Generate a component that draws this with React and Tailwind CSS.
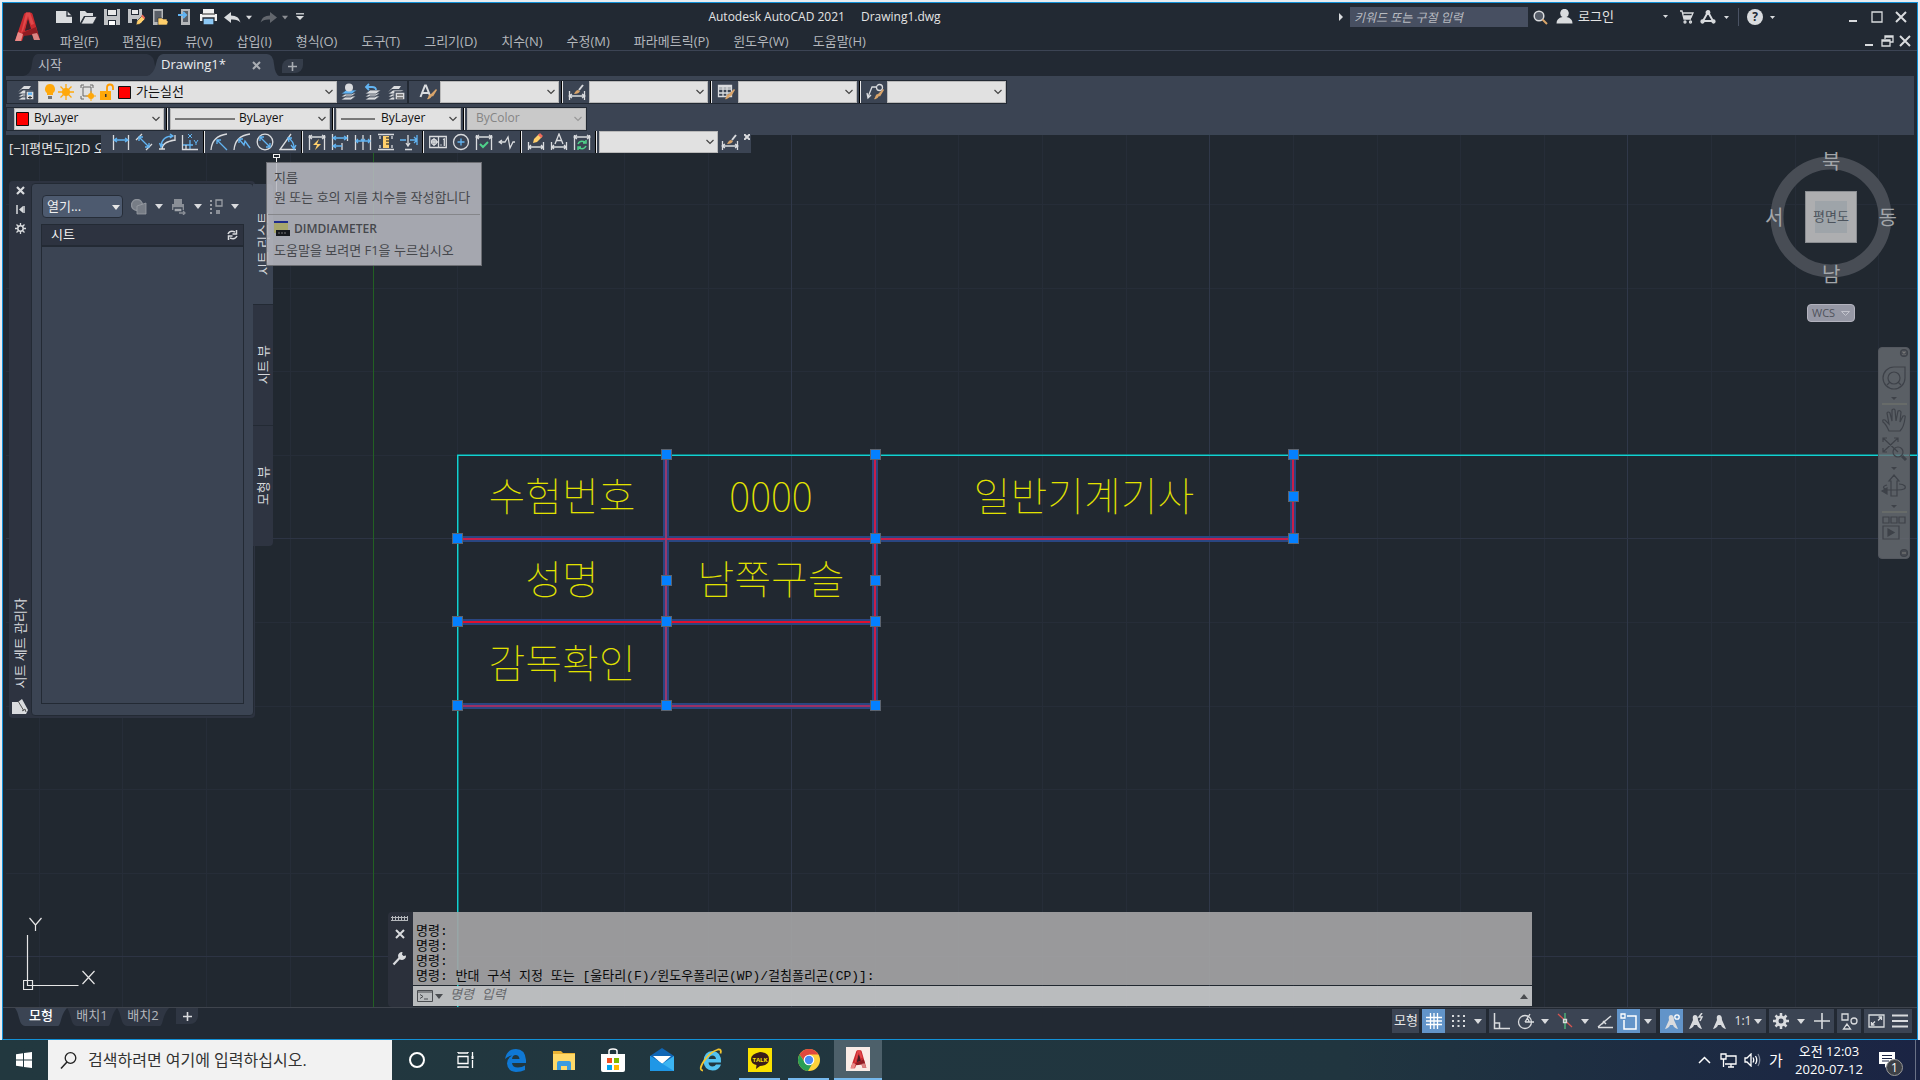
import React from "react";

const FONT = "font-['Open_Sans','Noto_Sans_CJK_KR',sans-serif]";
const W = "#d9dbde";
const B = "#62b4f2";
const Y = "#ffcf6b";

function Svg({ w = 18, h = w, box, children, className = "" }) {
  return (
    <svg width={w} height={h} viewBox={box || `0 0 ${w} ${h}`} fill="none" stroke={W} strokeWidth="1.3" className={"shrink-0 " + className}>
      {children}
    </svg>
  );
}

function Caret({ className = "w-[10px]", color = W, w = 7 }) {
  return (
    <span className={"flex items-center justify-center " + className}>
      <svg width={w} height="5" viewBox="0 0 8 5"><path d="M0 0h8L4 5z" fill={color} /></svg>
    </span>
  );
}

function IconButton({ label, className = "w-6", children }) {
  return (
    <button type="button" aria-label={label} className={"flex shrink-0 items-center justify-center " + className}>
      {children}
    </button>
  );
}

function AcadLogo({ w = 27, h = 30 }) {
  return (
    <svg width={w} height={h} viewBox="0 0 27 30">
      <path d="M1 29 10 2q.6-1.5 2.500-1.500h4q1.500 0 2 1.500L26 28h-6l-2-6-8 1-2 6z" fill="#c92a2f" />
      <path d="M14 7l3 10-6 2z" fill="#232a34" />
      <path d="M12 .5h4L20 12l-3 1-3-9-5 15-2 2z" fill="#e0484a" />
      <path d="M8 21 22 15l2 7-14 2z" fill="#8f1c22" />
      <path d="M1 29l3-9 5 2-2 7z" fill="#e98a88" />
      <path d="M20 28l-2-6 5-1 3 7z" fill="#d98583" />
      <path d="M14 8l2.500 8-5 2z" fill="#4b1c22" />
    </svg>
  );
}

/* ---------- title bar ---------- */

const quickAccess = [
  ["새로 만들기", <Svg key="n" w={16} h={14}><path d="M0 1h11l5 5v7H0z" fill={W} stroke="none" /><path d="M11 0v6h5" stroke="#232a34" /></Svg>],
  ["열기", <Svg key="o" w={17} h={14}><path d="M0 13V1h5l2 2h6v3H4z" fill={W} stroke="none" /><path d="M1 14 5 6.500h12L13 14z" fill={W} stroke="#232a34" strokeWidth=".8" /></Svg>],
  ["저장", <Svg key="s" w={16}><path d="M0 0h16v16H0z" fill="#c0c2c5" stroke="none" /><path d="M3 0h10v7H3zM4 11h8v5H4z" fill="#232a34" stroke="none" /><path d="M4 1h8v5H4z" fill="#e8e8e8" stroke="none" /><path d="M5 12h6v4H5z" fill="#fff" stroke="none" /></Svg>],
  ["다른 이름으로 저장", <Svg key="sa" w={17} h={16}><path d="M0 0h14v14H0z" fill="#c0c2c5" stroke="none" /><path d="M3 0h8v6H3zM4 10h5v4H4z" fill="#232a34" stroke="none" /><path d="M4 1h6v4H4z" fill="#e8e8e8" stroke="none" /><path d="M8 16l1-4 5-5 3 3-5 5z" fill={Y} stroke="#232a34" strokeWidth=".6" /><path d="M13 7l1.500-1.500L17.500 9 16 10z" fill="#ee6a5c" stroke="none" /></Svg>],
  ["웹에서 열기", <Svg key="w" w={16}><path d="M1 0h10v16H1z" fill="#b5b7ba" stroke="none" /><path d="M2.500 2h7v11h-7z" fill="#5a5f67" stroke="none" /><path d="M6 16V9h4l1 1h4v2h1.500L15 16z" fill={Y} stroke="#232a34" strokeWidth=".6" /></Svg>],
  ["모바일로 저장", <Svg key="m" w={14} h={16}><path d="M4 0h9v16H4z" fill="#b5b7ba" stroke="none" /><path d="M6 2h5v11H6z" fill="#5a5f67" stroke="none" /><path d="M1 6h7M6 3l3 3-3 3" stroke={B} strokeWidth="2" /></Svg>],
  ["플롯", <Svg key="p" w={17} h={16}><path d="M3 0h11v5H3zM0 5h17v7H0z" fill="#f0f0f0" stroke="none" /><path d="M3 9h11v7H3z" fill="#8cc8f5" stroke="#232a34" /><path d="M2 5h13" stroke="#555" /></Svg>],
];

function TitleBar() {
  const menus = ["파일(F)", "편집(E)", "뷰(V)", "삽입(I)", "형식(O)", "도구(T)", "그리기(D)", "치수(N)", "수정(M)", "파라메트릭(P)", "윈도우(W)", "도움말(H)"];
  return (
    <header className="flex border-b border-[#3c4454] text-[#e4e4e4]">
      <button type="button" aria-label="응용프로그램 메뉴" className="flex w-[49px] shrink-0 items-center justify-center"><AcadLogo /></button>
      <div className="min-w-0 flex-1">
        <div className="flex h-7 items-center">
          {quickAccess.map(([l, i]) => <IconButton key={l} label={l}>{i}</IconButton>)}
          <IconButton label="명령취소"><Svg w={17} h={11}><path d="M0 5.500 7 0v3.500q8 0 9.500 7-3-3.500-9.500-3V11z" fill={W} stroke="none" /></Svg></IconButton>
          <Caret w={6} />
          <IconButton label="명령복구" className="ml-[2px] w-6"><Svg w={17} h={11}><path d="M17 5.500 10 0v3.500q-8 0-9.500 7 3-3.500 9.500-3V11z" fill="#62666d" stroke="none" /></Svg></IconButton>
          <Caret w={6} color="#8b8e93" />
          <IconButton label="신속 접근 도구막대 사용자화" className="w-5"><Svg w={8} h={8}><path d="M0 .8h8" /><path d="M0 3h8L4 7z" fill={W} stroke="none" /></Svg></IconButton>
          <h1 className="flex-1 text-center text-xs"><span>Autodesk AutoCAD 2021</span><span className="ml-4">Drawing1.dwg</span></h1>
          <div className="flex h-full shrink-0 items-center">
            <Svg w={5} h={8} className="mr-[6px]"><path d="M0 0l4 4-4 4z" fill={W} stroke="none" /></Svg>
            <input aria-label="검색" placeholder="키워드 또는 구절 입력" className="h-5 w-[178px] bg-[#474f61] px-1 text-xs italic placeholder:text-[#b9bcc2]" />
            <IconButton label="찾기" className="w-6"><Svg w={15}><circle cx="6" cy="6" r="4.800" fill="#555c68" strokeWidth="1.500" /><path d="M9.500 9.500l4.500 4.500" stroke="#d9a46a" strokeWidth="2" /></Svg></IconButton>
            <button type="button" className="flex items-center gap-[5px] pl-1 text-xs">
              <Svg w={17} h={15}><path d="M8.500 0a3.800 4.200 0 0 1 2 8q6 1 6 6.500H.500Q.500 9 6.500 8a3.800 4.200 0 0 1 2-8" fill={W} stroke="none" /></Svg>
              <span className="w-[73px] text-left text-[13px]">로그인</span>
              <Caret w={5} className="w-[18px]" />
            </button>
            <IconButton label="앱 스토어" className="w-6"><Svg w={15} h={14}><path d="M1 1h2l2 8h7M4 3h10l-2 4.500H5M5 6h8" /><circle cx="6" cy="12" r="1" /><circle cx="11.500" cy="12" r="1" /></Svg></IconButton>
            <IconButton label="Autodesk" className="w-5"><Svg w={16} h={14}><path d="M8 2 3 11h10z" strokeWidth="2" /><circle cx="8" cy="2.500" r="1.800" fill={W} /><circle cx="2.500" cy="11.500" r="1.500" fill={W} /><circle cx="13.500" cy="11.500" r="1.500" fill={W} /></Svg></IconButton>
            <Caret w={5} className="w-4" />
            <span className="mx-1 h-[18px] w-px bg-[#4a5263]" />
            <IconButton label="도움말" className="w-6"><span className="flex h-4 w-4 items-center justify-center rounded-full bg-[#d9dbde] text-xs font-bold leading-4 text-[#232a34]">?</span></IconButton>
            <Caret w={5} className="w-[10px]" />
            <IconButton label="최소화" className="ml-16 w-6"><Svg w={10} h={10}><path d="M1 9h8" strokeWidth="2" /></Svg></IconButton>
            <IconButton label="최대화" className="w-6"><Svg w={12}><path d="M1 1h10v10H1z" /></Svg></IconButton>
            <IconButton label="닫기" className="mr-1 w-6"><Svg w={12}><path d="M1 1l10 10M11 1 1 11" strokeWidth="2" /></Svg></IconButton>
          </div>
        </div>
        <div className="flex h-[19px] items-center">
          <nav className="flex gap-6 pl-2 text-[13px] leading-[18px] text-[#b4b7bc]">
            {menus.map((m) => <button type="button" key={m} className="whitespace-nowrap">{m}</button>)}
          </nav>
          <div className="ml-auto mr-[3px] flex">
            <IconButton label="도면 최소화" className="w-[18px]"><Svg w={10} h={10}><path d="M1 9h8" strokeWidth="2" /></Svg></IconButton>
            <IconButton label="도면 복원" className="w-[18px]"><Svg w={13} h={12}><path d="M4 4V1h8v6H9M1 5h8v6H1zM4 2h8M1 6h8" /></Svg></IconButton>
            <IconButton label="도면 닫기" className="w-[18px]"><Svg w={12}><path d="M1 1l10 10M11 1 1 11" strokeWidth="2" /></Svg></IconButton>
          </div>
        </div>
      </div>
    </header>
  );
}

function FileTabs() {
  return (
    <div className="flex h-[25px] items-end pl-5 text-[13px]">
      <button type="button" className="relative h-[22px] w-[132px] text-left text-[#b9bcc2]">
        <svg className="absolute inset-0" width="132" height="22"><path d="M0 22Q8 21 9 10T16 0H124q7 1 8 12v10z" fill="#2e3542" /></svg>
        <span className="relative pl-[15px]">시작</span>
      </button>
      <div className="relative -ml-2 flex h-[22px] w-[132px] items-center justify-between pl-[14px] pr-[17px]">
        <svg className="absolute inset-0" width="132" height="22"><path d="M0 22Q7 20 9 10T16 0H120q6 0 7 10t5 12z" fill="#3b4453" /></svg>
        <button type="button" className="relative text-[13px] text-[#eceef0]">Drawing1*</button>
        <IconButton label="탭 닫기" className="relative w-3"><Svg w={9}><path d="M1 1l7 7M8 1 1 8" strokeWidth="2" stroke="#a9adb3" /></Svg></IconButton>
      </div>
      <button type="button" aria-label="새 탭" className="mb-[3px] ml-[3px] flex h-[14px] w-[21px] items-center justify-center rounded-br-lg rounded-tl-lg bg-[#353d4a]">
        <Svg w={9}><path d="M4.500 0v9M0 4.500h9" strokeWidth="1.600" stroke="#a9adb3" /></Svg>
      </button>
    </div>
  );
}

/* ---------- toolbars ---------- */

function Grip() {
  return <span className="my-1 ml-[2px] mr-px w-[4px] shrink-0 bg-[radial-gradient(#8b929d_40%,transparent_45%)] bg-[length:2px_2px]" />;
}

function Sep() {
  return <span className="mx-[2px] w-[2px] shrink-0 border-l border-black bg-[#e8e8e8]" />;
}

function Combo({ label, value = "", width = "w-[119px]", pad = "pl-1", disabled = false, children }) {
  return (
    <span className={"relative flex h-[22px] shrink-0 " + width}>
      <select aria-label={label} disabled={disabled} defaultValue={value}
        className={"block h-[22px] w-full appearance-none border border-[#b9b9b9] pb-[3px] text-[12px] leading-4 disabled:bg-[#c9c9c9] disabled:text-[#858585] bg-[#e1e1e1] text-[#111] " + pad}>
        <option>{value}</option>
      </select>
      <span className="pointer-events-none absolute inset-y-0 left-0 flex items-center">{children}</span>
      <svg className="pointer-events-none absolute right-1 top-2" width="8" height="6"><path d="M.5 1 4 4.500 7.500 1" fill="none" stroke={disabled ? "#999" : "#444"} strokeWidth="1.200" /></svg>
    </span>
  );
}

const Layers = ({ children, top = W }) => (
  <Svg w={18} h={18}>
    <path d="M1 17 6 13h10l-5 4zM1 14l5-4h10l-5 4z" fill={W} stroke="#3b4453" strokeWidth=".8" />
    <path d="M1 11l5-4h11l-5 4z" fill={top} stroke="#3b4453" strokeWidth=".8" />
    {children}
  </Svg>
);

const brush = <path d="M8 16q3 1 5-3l1 .5L18 7l-1-1-5 5q-2 0-2.500 2T8 16z" fill="#d9a46a" stroke="none" />;

const DimStyle = () => <Svg w={18} h={18}><path d="M1.500 8v9M16.500 8v9M1 13h16M4 11l-3 2 3 2M14 11l3 2-3 2" /><path d="M6 11q2-4 4-4l2 1q-1 3-6 3z" fill="#d9a46a" stroke="none" /><path d="M11 7l4-5" strokeWidth="2" /></Svg>;

const bar = "flex h-6 border border-[#222933] bg-[#3b4453]";

function Toolbars() {
  return (
    <div className="mx-[3px] h-[59px] bg-[#3b4453] pt-1">
      <div className="flex">
        <div className={bar}>
          <Grip />
          <IconButton label="도면층 특성" className="w-6"><Layers><path d="M1 9l6-6h7l-2 3H5z" fill={W} stroke="none" /><path d="M9 8h8v9H9z" fill={W} stroke="#3b4453" /><path d="M11 9.500h4v2.500h-4z" fill={B} stroke="none" /><path d="M11 14.500h4M13 13v3" stroke="#333" strokeWidth="1" /></Layers></IconButton>
          <Combo label="도면층" value="가는실선" width="w-[299px]" pad="pl-[97px] text-[13px]">
            <svg width="96" height="18" viewBox="0 0 96 18">
              <path d="M12 1a5 5 0 0 1 3 9v2H9v-2a5 5 0 0 1 3-9z" fill="#ffa80a" /><path d="M10 13h4v3h-4z" fill="#777" />
              <circle cx="28" cy="9" r="4" fill="#ffa80a" /><path d="M28 1v16M20 9h16M22.500 3.500l11 11M33.500 3.500l-11 11" stroke="#ffa80a" strokeWidth="1.300" />
              <path d="M43 5V2h3M52 2h3v3M43 13v3h3M45 4h8v9h-8z" fill="none" stroke="#666" /><circle cx="53" cy="13" r="3" fill="#ffa80a" /><path d="M53 8v10M48 13h10" stroke="#ffa80a" />
              <path d="M62 8h11v9H62z" fill="#ffa80a" /><path d="M69 8V4.500q0-3 3-3t3 3V7" fill="none" stroke="#ff9c00" strokeWidth="1.800" /><path d="M67 11h1.500v3H67z" fill="#333" />
              <path d="M80.500 3.500h12v12h-12z" fill="#f00" stroke="#111" />
            </svg>
          </Combo>
          <IconButton label="객체의 도면층을 현재로" className="w-6"><Layers top="#62b4f2"><circle cx="9" cy="4.500" r="4" fill={W} stroke="none" /></Layers></IconButton>
          <IconButton label="이전 도면층" className="w-6"><Layers><path d="M2 4h6q4 0 4 3M5 1 2 4l3 3" stroke={B} strokeWidth="1.800" /></Layers></IconButton>
          <IconButton label="도면층 상태" className="w-[22px]"><Layers><path d="M1 9l6-6h7l-2 3H5z" fill={W} stroke="none" /><path d="M8 9h10v8H8z" fill={W} stroke="#3b4453" /><path d="M10 12h6M10 15h6" stroke="#666" /></Layers></IconButton>
        </div>
        <div className={bar}>
          <Grip />
          <IconButton label="문자 스타일" className="w-6"><Svg w={18}><path d="M1.500 14 6 2.500h1L11.500 14M3 10h7" strokeWidth="2" />{brush}</Svg></IconButton>
          <Combo label="문자 스타일 목록" />
          <Sep />
          <IconButton label="치수 스타일" className="w-6"><DimStyle /></IconButton>
          <Combo label="치수 스타일 목록" />
          <Sep />
          <IconButton label="테이블 스타일" className="w-6"><Svg w={18}><path d="M1.500 2.500h13v11h-13zM1.500 6h13M1.500 10h13M6 3v11M10 3v11M2 4h12" />{brush}</Svg></IconButton>
          <Combo label="테이블 스타일 목록" />
          <Sep />
          <IconButton label="다중 지시선 스타일" className="w-6"><Svg w={18}><circle cx="13.500" cy="4.500" r="3" /><path d="M10 4H6L2 14M1 10l1 5 3-3" />{brush}</Svg></IconButton>
          <Combo label="다중 지시선 목록" />
        </div>
      </div>
      <div className="mt-[3px] flex">
        <div className={bar}>
          <Grip />
          <Combo label="색상" value="ByLayer" width="w-[150px]" pad="pl-[19px]"><svg width="17" height="18"><path d="M2.500 2.500h12v13h-12z" fill="#f00" stroke="#111" /></svg></Combo>
          <Sep />
          <Combo label="선종류" value="ByLayer" width="w-[160px]" pad="pl-[68px]"><svg width="66" height="2"><path d="M5 1h60" stroke="#111" strokeWidth="1" /></svg></Combo>
          <Sep />
          <Combo label="선가중치" value="ByLayer" width="w-[125px]" pad="pl-[44px]"><svg width="40" height="2"><path d="M5 1h34" stroke="#111" strokeWidth="1" /></svg></Combo>
          <Sep />
          <Combo label="플롯 스타일" value="ByColor" width="w-[119px]" pad="pl-2" disabled />
        </div>
      </div>
    </div>
  );
}

const ends = <path d="M1.500 2v15M16.500 2v15" />;
const dims = [
  ["선형", <>{ends}<path d="M2 7h14M5 5 2 7l3 2M13 5l3 2-3 2" stroke={B} /></>],
  ["정렬", <><path d="M1 7l6-6M11 17l6-6" /><path d="M4 4l10 10M4 8V4h4M10 14h4v-4" stroke={B} /></>],
  ["호 길이", <><path d="M1 16h6M17 2v6M4 16Q4 9 17 7" /><path d="M3 13Q4 3 15 3M1.500 10l1.500 4 2-3M12 1l3 2-3 2" stroke={B} /></>],
  ["세로좌표", <><path d="M9 7v10M1 12h11" stroke={B} /><path d="M7 1l4 4M11 1 7 5M13 7l2 3 2-3M15 10v2" stroke={B} strokeWidth="1" /><path d="M1.500 2v14.500h15.500M5 12v4" /></>],
  null,
  ["반지름", <><path d="M1 17Q2 3 17 1" /><path d="M7 7l10 10M7 11V7h4" stroke={B} /></>],
  ["꺾기", <><path d="M1 17Q2 3 17 1" /><path d="M6 6l5 6 1-4 5 7M6 10V6h4" stroke={B} /></>],
  ["지름", <><circle cx="9" cy="9" r="7.800" /><path d="M4 4l10 10M4 8V4h4M10 14h4v-4" stroke={B} /></>],
  ["각도", <><path d="M12 1 1 16.500h16" /><path d="M9 5q6 3 6 10M12 12l3 4 2-4M13 5H9l1 4" stroke={B} /></>],
  null,
  ["신속", <>{ends}<path d="M1 4h16M4 2 1 4l3 2M14 2l3 2-3 2" /><path d="M11 6 5 12h4l-2 5 6-6H9z" fill={Y} stroke="none" /></>],
  ["기준선", <><path d="M1.500 1v16M16.500 2v6M11 10v7" /><path d="M2 5h14M5 3 2 5l3 2M13 3l3 2-3 2M2 13h9M5 11l-3 2 3 2" stroke={B} /></>],
  ["연속", <>{ends}<path d="M9 2v15" /><path d="M2 8h14M4 6 2 8l2 2M14 6l2 2-2 2M7 6l2 2 2-2" stroke={B} /></>],
  ["치수 간격", <><path d="M1 1.500h16M1 16.500h16M3 3v3M15 3v3M3 12v3M15 12v3" /><path d="M6 3h6v12H6z" fill={Y} stroke="none" /><path d="M9 5h3M9 8h3M9 11h3" stroke="#5c5137" /></>],
  ["치수 끊기", <><path d="M8 2v10M6 10l2 3 2-3M5 16.500h7" /><path d="M0 7h6M10 7h7M14 4l3 3-3 3M17 2v10" stroke={B} /></>],
  null,
  ["공차", <><path d="M.700 3.500h16.600v11H.700zM9.500 4v11" /><circle cx="5" cy="9" r="2.500" /><path d="M5 5v8M2 9h7M11.500 12h1M14 6.500l1.300-.5v7" /></>],
  ["중심 표식", <><circle cx="9" cy="9" r="7.500" /><path d="M9 5.500v7M5.500 9h7" stroke={B} /></>],
  ["검사", <>{ends}<path d="M1 4h16M4 2 1 4l3 2M14 2l3 2-3 2" /><path d="M5 11l3 3 5-5" stroke="#4fd08a" strokeWidth="2" /></>],
  ["꺾어진 선형", <path d="M1 9h6l3-5 2 11 3-6h2M4 7 1 9l3 2" />],
  null,
  ["치수 편집", <><path d="M1.500 9v8M16.500 9v8M2 14h14M4 12l-2 2 2 2M14 12l2 2-2 2" /><path d="M6 10l1-4 5-5 3 3-5 5z" fill={Y} stroke="none" /><path d="M11 2l2-2 3 3-2 2z" fill="#ee6a5c" stroke="none" /></>],
  ["치수 문자 편집", <><path d="M1.500 9v8M16.500 9v8M2 14h14M4 12l-2 2 2 2M14 12l2 2-2 2M5 11l4-10 4 10M6.500 7.500h5" /></>],
  ["치수 업데이트", <>{ends}<path d="M1 4h16M4 2 1 4l3 2M14 2l3 2-3 2" /><path d="M5 11q2-4 7-2M13 7v3h-3M13 13q-2 4-7 2M5 17v-3h3" stroke="#4fd08a" strokeWidth="1.500" /></>],
  null,
];

function DimToolbar() {
  return (
    <div className="absolute -top-1 left-[98px] z-10 flex h-[22px] items-stretch bg-[#3b4453] pl-px">
      <Grip />
      {dims.map((d, i) => d === null ? <Sep key={i} /> : (
        <IconButton key={i} label={d[0]} className="w-[23px]"><Svg w={18}>{d[1]}</Svg></IconButton>
      ))}
      <Combo label="치수 스타일 선택" />
      <IconButton label="치수 스타일 관리" className="w-6"><DimStyle /></IconButton>
      <button type="button" aria-label="도구막대 닫기" className="flex w-[9px] justify-center pt-[3px]"><Svg w={6}><path d="M0 0l6 6M6 0 0 6" strokeWidth="2" /></Svg></button>
    </div>
  );
}

/* ---------- drawing ---------- */

const minorX = [39, 122, 206, 290, 457, 541, 624, 708, 875, 958, 1042, 1126, 1293, 1377, 1460, 1544, 1711, 1795, 1878];
const majorX = [791, 1209, 1627];
const minorY = [204, 288, 371, 455, 622, 706, 789, 873];
const majorY = [538, 956];
const selected = [
  [457, 539, 1293, 539, "#c81e4a"], [457, 622, 875, 622, "#e0102e"], [457, 706, 875, 706, "#9c2f63"],
  [666, 455, 666, 706, "#97396f"], [875, 455, 875, 706, "#c81e4a"], [1293, 455, 1293, 538, "#c81e4a"],
];
const grips = [[666, 454], [875, 454], [1293, 454], [1293, 496], [457, 538], [875, 538], [1293, 538], [666, 580], [875, 580], [457, 621], [666, 621], [875, 621], [457, 705], [666, 705], [875, 705]];
const labels = [[562, 511, "수험번호"], [771, 511, "0000"], [1084, 511, "일반기계기사"], [562, 594, "성명"], [771, 594, "남쪽구슬"], [562, 678, "감독확인"]];

function Drawing() {
  return (
    <svg className="absolute inset-0 h-full w-full" shapeRendering="crispEdges">
      <g transform="translate(-3 -135)">
        {minorX.map((x) => <path key={x} d={`M${x + 0.5} 135V3000`} stroke="#262d38" />)}
        {minorY.map((y) => <path key={y} d={`M6 ${y + 0.5}H5000`} stroke="#262d38" />)}
        {majorX.map((x) => <path key={x} d={`M${x + 0.5} 135V3000`} stroke="#303849" />)}
        {majorY.map((y) => <path key={y} d={`M6 ${y + 0.5}H5000`} stroke="#2d3444" />)}
        <path d="M373.500 135V3000" stroke="#226023" />
        <path d="M458 3000V455H5000" fill="none" stroke="#0f7a7d" strokeWidth="2" />
        <path d="M457.500 3000V455.500H5000" fill="none" stroke="#14d0d0" />
        {selected.map(([a, b, c, d], i) => <path key={i} d={`M${a} ${b}L${c} ${d}`} stroke="#2a4681" strokeWidth="6" />)}
        {selected.map(([a, b, c, d, s], i) => <path key={i} d={`M${a} ${b}L${c} ${d}`} stroke={s} strokeWidth="2" />)}
        {grips.map(([x, y]) => <path key={`${x}-${y}`} d={`M${x - 4.5} ${y - 4.5}h10v10h-10z`} fill="#0480ff" stroke="#5c6470" />)}
        <g fill="#e2e200" textAnchor="middle" className="font-['Noto_Sans_CJK_KR',sans-serif] text-[40px] font-thin" shapeRendering="auto">
          {labels.map(([x, y, t]) => <text key={t} x={x} y={y}>{t}</text>)}
        </g>
        <path d="M276 157V202M273 154h6v3h-6z" fill="none" stroke="#f0f0f0" />
      </g>
    </svg>
  );
}

function UcsIcon() {
  return (
    <svg className="absolute bottom-4 left-5" width="76" height="75" fill="none" stroke="#e6e6e6" strokeWidth="1.200">
      <path d="M4.500 19v50.500h51M.500 64.500h9v9h-9zM6.500 2l6 7 6-7M12.500 9v6M59.500 55l12 13M71.500 55l-12 13" />
    </svg>
  );
}

function ViewCube() {
  const l = "absolute text-[20px] leading-5 text-[#a3a6aa]";
  return (
    <div className="absolute right-[17px] top-[14px] h-[136px] w-[138px]">
      <svg className="absolute inset-0" width="138" height="136"><circle cx="69" cy="68" r="54" fill="none" stroke="#484d55" strokeWidth="13" /></svg>
      <span className={l + " left-[60px] top-[3px]"}>북</span>
      <span className={l + " left-[3px] top-[59px]"}>서</span>
      <span className={l + " right-[3px] top-[59px]"}>동</span>
      <span className={l + " left-[60px] bottom-0"}>남</span>
      <button type="button" className="absolute left-[43px] top-[42px] flex h-[52px] w-[52px] items-center justify-center border border-[#8a8d91] bg-[#adaeb0] text-[13px] text-[#4c535c]">
        <span className="absolute inset-[9px] bg-[#9ea4a9]" /><span className="relative whitespace-nowrap">평면도</span>
      </button>
    </div>
  );
}

function NavBar() {
  return (
    <div className="absolute right-[7px] top-[212px] flex h-[212px] w-8 flex-col items-center rounded border border-[#54585f] bg-[#696d73]/80">
      <svg width="30" height="210" fill="none" stroke="#3e4249" strokeWidth="1.200">
        <circle cx="25" cy="5" r="3.500" fill="#474b52" /><path d="M23.500 3.500l3 3M26.500 3.500l-3 3" stroke="#777" />
        <path d="M15 19h11v11A11 11 0 1 1 15 19z" /><circle cx="15" cy="30" r="6" /><path d="M8 37l3-3M22 37l-3-3" />
        <path d="M12 49h6l-3 3z" fill="#3e4249" stroke="none" /><path d="M3 56h25M3 164h25" stroke="#75786f" />
        <path d="M10 83q-3-7-6-9-1-3 2-2l4 4-2-11q1-2 3 0l2 8 0-11q2-2 3 0l1 11 2-10q2-1 3 1l-1 10 3-6q3-1 2 2-1 9-5 13z" />
        <path d="M4 90l15 14M19 90 4 104M4 94v-4h4M15 90h4v4M4 100v4h4" /><circle cx="19" cy="104" r="5" /><path d="M23 108l4 4" strokeWidth="3" />
        <path d="M12 119h6l-3 3z" fill="#3e4249" stroke="none" />
        <path d="M12 148v-15h-2l5-6 5 6h-2v15zM8 137q-7 2 0 5h10q10 0 8-4-2-2-6-2" /><path d="M3 143l5-3v6z" fill="#3e4249" />
        <path d="M12 157h6l-3 3z" fill="#3e4249" stroke="none" />
        <path d="M4 169h6v6H4zM12 169h6v6h-6zM20 169h6v6h-6zM4 178h16v13H4z" /><path d="M9 181v7l6-3.500z" fill="#3e4249" />
        <circle cx="25" cy="205" r="3.500" fill="#474b52" /><path d="M23 205h4" stroke="#777" />
      </svg>
    </div>
  );
}

const vertical = "rotate-180 [text-orientation:sideways] [writing-mode:vertical-rl]";

function SheetPanel() {
  const tools = [
    ["게시", <Svg key="a" w={16}><circle cx="6" cy="6" r="5.500" fill="#777d86" stroke="#8d929a" /><path d="M6 7l9-3v11H6z" fill="#777d86" stroke="#9a9ea5" strokeWidth=".8" /></Svg>],
    ["출력", <Svg key="b" w={16}><path d="M4 0h8v5h2v6H2V5h2z" fill="#8a8f97" stroke="none" /><path d="M4 9h8v4H4z" fill="#a3a7ad" stroke="#3b4453" /><path d="M9 14h6M13 12l2 2-2 2" stroke="#8a8f97" /></Svg>],
    ["뷰", <Svg key="c" w={14} h={16}><path d="M2 1v14" stroke="#9a9ea5" strokeWidth="2" strokeDasharray="2 2" /><path d="M7 1h6v6H7z" stroke="#9a9ea5" /><path d="M7 11h4v4H7z" fill="#8a8f97" stroke="none" /></Svg>],
  ];
  return (
    <aside className="absolute left-[6px] top-[46px] flex text-[#d6d8dc]">
      <div className="flex h-[537px] w-[246px] rounded-sm bg-[#2d3340] pb-[2px] pr-px pt-[2px]">
        <div className="flex w-[22px] shrink-0 flex-col items-center pb-px">
          <IconButton label="패널 닫기" className="mt-[3px]"><Svg w={9}><path d="M1 1l7 7M8 1 1 8" strokeWidth="2.200" /></Svg></IconButton>
          <IconButton label="자동 숨기기" className="mt-[10px]"><Svg w={9}><path d="M1 0v9M8 1v7" strokeWidth="1.500" /><path d="M3 4.500 7 1v7z" fill={W} stroke="none" /></Svg></IconButton>
          <IconButton label="특성" className="mt-[9px]"><Svg w={11}><circle cx="5.500" cy="5.500" r="2.700" strokeWidth="1.500" /><path d="M5.500 0v2.500M5.500 8.500V11M0 5.500h2.500M8.500 5.500H11M1.500 1.500l2 2M7.500 7.500l2 2M9.500 1.500l-2 2M3.500 7.500l-2 2" /></Svg></IconButton>
          <span className={"mt-auto text-[13px] leading-4 " + vertical}>시트 세트 관리자</span>
          <Svg w={16} className="mt-[11px]"><path d="M0 3h6l4-3 6 11-2 4H0z" fill={W} stroke="none" /><path d="M6 2l6 10M10 12l3-2 1 3" stroke="#555" strokeWidth="1" /></Svg>
        </div>
        <div className="flex min-w-0 flex-1 flex-col rounded border border-[#232a34] bg-[#3b4453] px-[9px] pb-[11px] pt-[11px]">
          <div className="flex items-center">
            <span className="relative ml-px flex h-[23px] w-[81px]">
              <select aria-label="시트 세트" className="block h-[23px] w-full appearance-none rounded-sm border border-[#262d38] bg-[#4d5a6f] pb-[2px] pl-1 text-[13px] leading-4 text-[#f0f0f0]"><option>열기...</option></select>
              <svg className="pointer-events-none absolute right-[3px] top-[10px]" width="8" height="5"><path d="M0 0h8L4 5z" fill="#e6e6e6" /></svg>
            </span>
            {tools.map(([l, i], k) => (
              <button type="button" key={l} aria-label={l} className={k === 0 ? "ml-2 flex items-center" : "ml-[5px] flex items-center"}>{i}<Caret className="w-[18px] pl-[6px]" w={8} /></button>
            ))}
          </div>
          <div className="mt-[6px] flex h-[22px] items-center justify-between border border-[#232a34] bg-[#2d3340] pl-[9px] pr-[5px] text-[13px] text-[#f0f0f0]">
            <span>시트</span>
            <Svg w={11} h={10}><path d="M1 4q2-4 7-2M9.500 0v4h-4M10 6q-2 4-7 2M1.500 10V6h4" strokeWidth="1.500" /></Svg>
          </div>
          <div className="flex-1 border border-[#232a34]" />
        </div>
      </div>
      <div className="-ml-[2px] mt-[3px] flex flex-col text-[13px] leading-5">
        <button type="button" className="flex h-[120px] w-5 items-center justify-center rounded-tr bg-[#3b4453]"><span className={vertical}>시트 리스트</span></button>
        <button type="button" className="flex h-[121px] w-5 items-center justify-center border-t border-[#232a34] bg-[#2e3441]"><span className={vertical}>시트 뷰</span></button>
        <button type="button" className="flex h-[121px] w-5 items-center justify-center rounded-br border-t border-[#232a34] bg-[#2e3441]"><span className={vertical}>모형 뷰</span></button>
      </div>
    </aside>
  );
}

function DimTooltip() {
  return (
    <div role="tooltip" className="absolute left-[263px] top-[27px] z-10 w-[216px] border border-[#6c6e73] bg-[#b7b8c0]/88 text-[13px] leading-5 text-[#45474c]">
      <div className="px-[7px] pb-[7px] pt-1"><p>지름</p><p className="whitespace-nowrap">원 또는 호의 지름 치수를 작성합니다</p></div>
      <div className="mx-px border-t border-[#85868a] px-[6px] pb-[5px] pt-[2px]">
        <p className="flex items-center gap-1 text-xs font-semibold leading-[23px]">
          <svg width="16" height="16"><path d="M0 0h14v12H0z" fill="#a7a66c" /><path d="M0 1h14" stroke="#1f2c8c" strokeWidth="2" /><path d="M2 9h14v6H2z" fill="#15171b" /><path d="M4 12h9" stroke="#777" strokeDasharray="2 1" /></svg>
          DIMDIAMETER
        </p>
        <p>도움말을 보려면 F1을 누르십시오</p>
      </div>
    </div>
  );
}

function CommandWindow() {
  return (
    <section aria-label="명령행" className="absolute bottom-0 left-[385px] right-[385px] flex h-[95px] font-['Liberation_Mono','Noto_Sans_CJK_KR',monospace] text-[13px]">
      <div className="flex w-[25px] shrink-0 flex-col items-center gap-2 rounded-l bg-[#2b303b] pr-[2px] pt-1">
        <span className="h-[5px] w-[17px] bg-[radial-gradient(#b4b7bb_50%,transparent_55%)] bg-[length:3px_3px]" />
        <IconButton label="명령행 닫기" className=""><Svg w={10}><path d="M1 1l8 8M9 1 1 9" strokeWidth="2" /></Svg></IconButton>
        <IconButton label="명령행 사용자화" className="mt-1"><Svg w={15}><path d="M1.500 13.500 8.500 6" strokeWidth="2.200" /><path d="M14 4.500a4 4 0 1 1-3.500-3.500L10 3.500 11.500 5z" fill={W} stroke="none" /></Svg></IconButton>
      </div>
      <div className="flex min-w-0 flex-1 flex-col pb-px">
        <div className="flex flex-1 flex-col justify-end whitespace-pre bg-[#a2a3a4]/93 pb-px pl-[3px] leading-[15px] text-[#08090a]">
          <p>명령:</p><p>명령:</p><p>명령:</p>
          <p>명령: 반대 구석 지정 또는 [울타리(F)/윈도우폴리곤(WP)/걸침폴리곤(CP)]:</p>
        </div>
        <div className="mt-px flex h-5 items-center bg-[#c3c4c6]/95 pl-1 pr-1">
          <svg width="17" height="12" fill="none" stroke="#4a4c50"><path d="M.500 .500h15v11H.500zM1 2h15M3 4.500l3 2-3 2M7 9h4" /></svg>
          <Caret color="#4a4c50" w={8} className="w-[10px]" />
          <input aria-label="명령 입력" placeholder="명령 입력" className="ml-[6px] min-w-0 flex-1 bg-transparent italic leading-4 placeholder:text-[#66686c]" />
          <svg width="8" height="5"><path d="M0 5h8L4 0z" fill="#4a4c50" /></svg>
        </div>
      </div>
    </section>
  );
}

/* ---------- status bar ---------- */

function LayoutTab({ children, active, width = "w-[52px]" }) {
  return (
    <button type="button" className={"relative h-[18px] pb-[3px] text-[13px] leading-[15px] " + width + (active ? " font-medium text-white" : " text-[#b4b7bc]")}>
      <svg className="absolute inset-0 h-full w-full" viewBox="0 0 52 18" preserveAspectRatio="none"><path d="M0 0h52q-4 4-6 12t-5 6H10q-4 0-6-8T0 0z" fill={active ? "#3b4453" : "#2f3643"} /></svg>
      <span className="relative">{children}</span>
    </button>
  );
}

const grp = "flex h-6 items-stretch bg-[#3b4453]";
const on = "w-[23px] bg-[#6294c9]";
const Person = ({ children }) => <Svg w={17}><path d="M8 2q3 0 3 5l4 9q-4-1-5-4H7q-1 3-5 4l4-9q-1-5 2-5z" fill={W} stroke="none" />{children}</Svg>;

function StatusBar() {
  return (
    <footer className="flex h-8 border-t border-[#3f444d] bg-[#222933] text-[#e6e6e6]">
      <div className="flex pl-3">
        <LayoutTab active>모형</LayoutTab>
        <LayoutTab width="w-[50px]">배치1</LayoutTab>
        <LayoutTab>배치2</LayoutTab>
        <button type="button" aria-label="새 배치" className="ml-[7px] flex h-4 w-[22px] items-center justify-center rounded-br-lg bg-[#2f3643]"><Svg w={9}><path d="M4.500 0v9M0 4.500h9" strokeWidth="1.600" /></Svg></button>
      </div>
      <div className="ml-auto mr-[5px] flex gap-[3px] pt-px">
        <div className={grp + " pl-px"}><button type="button" className="w-[26px] whitespace-nowrap text-center text-[13px]">모형</button></div>
        <div className={grp}>
          <IconButton label="그리드" className={on}><Svg w={16}><path d="M4.500 0v16M11.500 0v16M0 4.500h16M0 11.500h16M8 0v16M0 8h16" stroke="#fff" /></Svg></IconButton>
          <IconButton label="스냅" className="w-[25px]"><Svg w={14}><path d="M1 2h13M1 7h13M1 12h13" strokeWidth="2" strokeDasharray="2 3.500" /></Svg></IconButton>
          <Caret w={8} className="w-4" />
        </div>
        <div className={grp}>
          <IconButton label="직교"><Svg w={17}><path d="M1.500 0v15.500H17M1.500 10h5v5" strokeWidth="1.500" /></Svg></IconButton>
          <IconButton label="극좌표"><Svg w={17}><circle cx="8" cy="9" r="6.500" /><path d="M8 9h9M8 9l5-8M12 9q0-2-2-4" /></Svg></IconButton>
          <Caret w={8} className="w-4" />
          <IconButton label="등각투영"><Svg w={16}><path d="M1 1l14 13" stroke="#d95550" /><path d="M8 0v16" stroke="#4fc07d" /><path d="M6.500 6.500h3v3h-3z" /></Svg></IconButton>
          <Caret w={8} className="w-4" />
          <IconButton label="객체 스냅 추적" className="w-6"><Svg w={17}><path d="M1 14.500h15M1 14 14 3M6 8l3 3M5 11l3-3" strokeWidth="1.500" /></Svg></IconButton>
          <IconButton label="객체 스냅" className={on}><Svg w={17}><path d="M4 7v9h12V3H7" stroke="#fff" strokeWidth="1.500" /><path d="M1 1h4v4H1z" stroke="#fff" /></Svg></IconButton>
          <Caret w={8} className="w-4" />
        </div>
        <div className={grp + " ml-px"}>
          <IconButton label="주석 가시성" className={on}><Person><circle cx="14" cy="4" r="2.200" fill="#6294c9" stroke="#fff" /></Person></IconButton>
          <IconButton label="자동 축척"><Person><path d="M15 0l-3 4h3l-2 4" stroke={W} strokeWidth="1.500" /></Person></IconButton>
          <IconButton label="주석 축척"><Person /></IconButton>
          <button type="button" className="flex w-[35px] items-center justify-center gap-[3px] text-xs">1:1<Caret w={8} className="w-2" /></button>
        </div>
        <div className={grp}>
          <IconButton label="작업공간"><Svg w={16}><circle cx="8" cy="8" r="4" strokeWidth="3" /><path d="M8 0v3M8 13v3M0 8h3M13 8h3M2.500 2.500l2 2M11.500 11.500l2 2M13.500 2.500l-2 2M4.500 11.500l-2 2" strokeWidth="2.500" /></Svg></IconButton>
          <Caret w={8} className="w-4" />
          <IconButton label="주석 감시" className="w-[25px]"><Svg w={16}><path d="M8 0v16M0 8h16" strokeWidth="1.600" /></Svg></IconButton>
        </div>
        <div className={grp}><IconButton label="객체 분리"><Svg w={17}><path d="M1 1h6v6H1zM6 11l3.500 5h-7z" /><circle cx="13" cy="8" r="3" /></Svg></IconButton></div>
        <div className={grp}>
          <IconButton label="화면 정리"><Svg w={17} h={14}><path d="M1 1h15v12H1zM3.500 8v3h3M4 10.500l3-3M13.500 6V3h-3M13 3.500l-3 3" /></Svg></IconButton>
          <IconButton label="사용자화"><Svg w={16} h={14}><path d="M0 1.500h16M0 7h16M0 12.500h16" strokeWidth="2" /></Svg></IconButton>
        </div>
      </div>
    </footer>
  );
}

/* ---------- taskbar ---------- */

const S = ({ children }) => <svg width="24" height="24" viewBox="0 0 24 24" fill="none">{children}</svg>;
const apps = [
  ["Cortana", <S key="1"><circle cx="12" cy="12" r="7" stroke="#fff" strokeWidth="2" /></S>],
  ["작업 보기", <S key="2"><path d="M4 5V4M14 5V4M4 5h10M4 20v-1h10v1M4 8.500h10v7H4zM18.500 4v4M18.500 12v8" stroke="#fff" strokeWidth="1.300" /><path d="M17.500 8h2v3h-2z" fill="#fff" /></S>],
  ["Edge", <S key="3"><path d="M2 11Q4 1 13 1q9 0 10 11v3H9q.500 4.500 6 4.500 4 0 7-2v4.500q-4 2-9 2-8.500-.500-9-8.500 0-5 5-8-4 .500-7 3.500z" fill="#0f78d4" /><path d="M9 11h7.500Q16 7 12.500 7 9.500 7 9 11z" fill="#21383f" /></S>],
  ["파일 탐색기", <S key="4"><path d="M1 3h8l2 2h12v17H1z" fill="#e9b234" /><path d="M1 6h22v16H1z" fill="#ffd968" /><path d="M5 22v-7q0-2 2-2h10q2 0 2 2v7h-4v-4H9v4z" fill="#3a9be0" /></S>],
  ["Store", <S key="5"><path d="M0 6h24v16q0 2-2 2H2q-2 0-2-2z" fill="#fff" /><path d="M8 6V3q0-2 4-2t4 2v3" stroke="#fff" strokeWidth="1.500" /><path d="M6 10h5v5H6z" fill="#f25022" /><path d="M13 10h5v5h-5z" fill="#7fba00" /><path d="M6 17h5v5H6z" fill="#00a4ef" /><path d="M13 17h5v5h-5z" fill="#ffb900" /></S>],
  ["메일", <S key="6"><path d="M0 8 12 0l12 8v15H0z" fill="#1066b5" /><path d="M3 8h18l-9 8z" fill="#fff" /><path d="M0 8l12 8 12-8v15H0z" fill="#3bb4f2" /><path d="M0 23V8l24 15z" fill="#1f97e6" /></S>],
  ["Internet Explorer", <S key="7"><path d="M22 14.500H9.500q.500 4 4 4 2.500 0 3.500-2h5Q20 22.500 13.500 22.500 5 22 4.500 13 5 3.500 13.500 3q9 .500 8.500 11.500z" fill="#53c3f1" /><path d="M9.500 11h7.500q-.500-3.500-3.500-3.500T9.500 11z" fill="#21383f" /><path d="M4 22.500q-5-.500 1-9.500T19 1.500q4-.500 2.500 4" stroke="#f4c62f" strokeWidth="1.800" /></S>],
  ["KakaoTalk", <S key="8"><path d="M0 0h24v24H0z" fill="#fae100" /><path d="M12 4q9 .500 9 7t-9 7l-4 3 .500-4Q3 16 3 11t9-7z" fill="#391b1b" /><text x="12" y="13.500" textAnchor="middle" fill="#fae100" fontSize="6" fontWeight="bold">TALK</text></S>],
  ["Chrome", <S key="9"><circle cx="12" cy="12" r="11" fill="#fdd23c" /><path d="M2.500 6.500A11 11 0 0 1 21.500 6.500H12L8 14z" fill="#e0483e" /><path d="M2.500 6.500A11 11 0 0 0 11 23l5-8.500H8z" fill="#2a9e54" /><circle cx="12" cy="12" r="5.300" fill="#fff" /><circle cx="12" cy="12" r="4.200" fill="#4a8af4" /></S>],
];

function Taskbar() {
  return (
    <div className="flex h-10 bg-linear-to-r from-[#22383f] via-[#20353f] via-70% to-[#1b2444] text-white">
      <IconButton label="시작" className="w-12"><svg width="16" height="16" fill="#fff"><path d="M0 2.200 7 1.200v6.300H0zM8 1l8-1v7.500H8zM0 8.500h7v6.300l-7-1zM8 8.500h8V16l-8-1z" /></svg></IconButton>
      <label className="flex w-[344px] items-center bg-[#f2f2f2] pl-3">
        <Svg w={17}><circle cx="10.500" cy="6" r="5.300" stroke="#222" /><path d="M7 10l-6 6.500" stroke="#222" strokeWidth="1.500" /></Svg>
        <input aria-label="검색" placeholder="검색하려면 여기에 입력하십시오." className="ml-[11px] flex-1 bg-transparent text-base leading-5 text-black placeholder:text-[#333]" />
      </label>
      {apps.map(([l, i]) => (
        <button type="button" key={l} aria-label={l} className="relative flex w-[49px] items-center justify-center">
          {i}
          {(l === "KakaoTalk" || l === "Chrome") && <span className="absolute inset-x-1 bottom-0 h-[2px] bg-[#76b9ed]" />}
        </button>
      ))}
      <button type="button" aria-label="AutoCAD" className="ml-px flex w-12 items-center justify-center border-b-2 border-[#76b9ed] bg-[#4d606a]">
        <span className="flex h-6 w-6 items-center justify-center bg-[#faece6]"><AcadLogo w={17} h={19} /></span>
      </button>
      <div className="ml-auto flex items-center">
        <IconButton label="숨겨진 아이콘"><Svg w={13} h={8}><path d="M1 7l5.500-5.500L12 7" stroke="#fff" strokeWidth="1.500" /></Svg></IconButton>
        <IconButton label="네트워크"><Svg w={17} h={15}><path d="M6 3h10v8H5M1 1h5v5H1zM3.500 6v8M8 14h6M11 11v3" stroke="#fff" /></Svg></IconButton>
        <IconButton label="볼륨"><Svg w={17} h={14}><path d="M1 5h2l4-4v12L3 9H1zM9 4.500q1.500 2.500 0 5M11.500 3q2.500 4 0 8" stroke="#fff" /><path d="M14 1q3.500 6 0 12" stroke="#7f8799" /></Svg></IconButton>
        <button type="button" className="w-6 text-[15px]">가</button>
        <button type="button" className="w-[82px] text-center text-[13px] leading-[18px]"><span className="block">오전 12:03</span><span className="block">2020-07-12</span></button>
        <button type="button" aria-label="알림 센터" className="relative mr-[15px] flex h-10 w-[30px] items-center pl-[9px]">
          <svg width="17" height="17"><path d="M0 0h16v12H9l-3 4v-4H0z" fill="#fff" /><path d="M3 3.500h10M3 6.500h10M3 9h7" stroke="#1b2444" /></svg>
          <span className="absolute -right-[3px] bottom-1 flex h-[17px] w-[17px] items-center justify-center rounded-full border border-[#999] bg-[#3d4046] text-xs">1</span>
        </button>
        <span className="mr-1 h-10 w-px bg-[#6a7186]" />
      </div>
    </div>
  );
}

export default function App() {
  return (
    <div className={"flex h-screen min-h-[800px] w-full flex-col overflow-hidden bg-[#e9edf2] " + FONT}>
      <div className="mx-[2px] mt-[2px] flex min-h-0 flex-1 flex-col border border-[#1290d6] bg-[#222933]">
        <TitleBar />
        <FileTabs />
        <Toolbars />
        <main className="relative min-h-0 flex-1 bg-[#212830]">
          <Drawing />
          <p className="absolute left-[6px] top-1 whitespace-nowrap text-[13px] leading-[18px] text-[#e6e6e6]">[−][평면도][2D 오</p>
          <DimToolbar />
          <SheetPanel />
          <DimTooltip />
          <UcsIcon />
          <ViewCube />
          <button type="button" className="absolute right-[62px] top-[169px] flex h-[18px] w-12 items-center justify-between rounded border border-[#b3b3be] bg-[#9698a5] px-1 text-[11px] text-[#50535c]">WCS<svg width="9" height="5" fill="none" stroke="#c2c3cc"><path d="M.500 .500h8l-4 4z" /></svg></button>
          <NavBar />
          <CommandWindow />
        </main>
        <StatusBar />
      </div>
      <Taskbar />
    </div>
  );
}
